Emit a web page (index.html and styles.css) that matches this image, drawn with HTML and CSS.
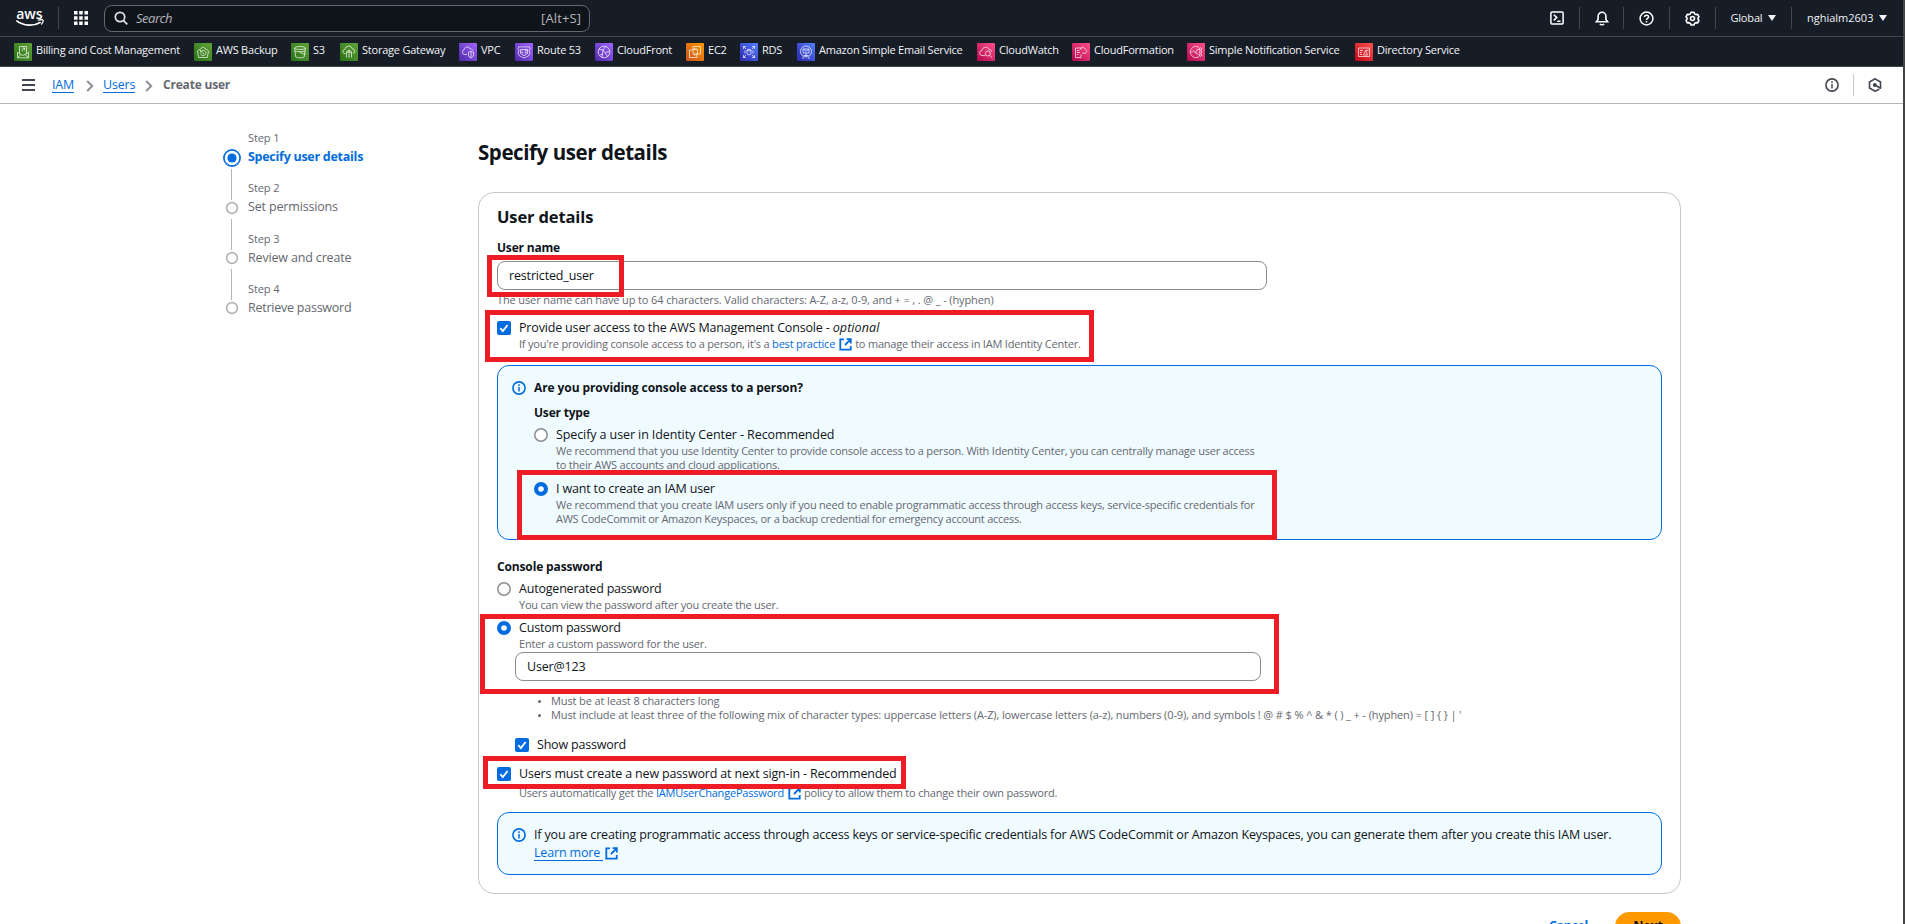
FILE: index.html
```html
<!DOCTYPE html>
<html lang="en">
<head>
<meta charset="utf-8">
<title>Create user | IAM | Global</title>
<link rel="stylesheet" href="styles.css">
</head>
<body>
<svg class="defs" width="0" height="0" aria-hidden="true">
  <defs>
    <linearGradient id="g-green" x1="0" y1="1" x2="1" y2="0"><stop offset="0" stop-color="#277116"/><stop offset="1" stop-color="#60a337"/></linearGradient>
    <linearGradient id="g-purple" x1="0" y1="1" x2="1" y2="0"><stop offset="0" stop-color="#4d27a8"/><stop offset="1" stop-color="#a166ff"/></linearGradient>
    <linearGradient id="g-orange" x1="0" y1="1" x2="1" y2="0"><stop offset="0" stop-color="#c8511b"/><stop offset="1" stop-color="#ff9900"/></linearGradient>
    <linearGradient id="g-blue" x1="0" y1="1" x2="1" y2="0"><stop offset="0" stop-color="#2e27ad"/><stop offset="1" stop-color="#527fff"/></linearGradient>
    <linearGradient id="g-pink" x1="0" y1="1" x2="1" y2="0"><stop offset="0" stop-color="#b0084d"/><stop offset="1" stop-color="#ff4f8b"/></linearGradient>
    <linearGradient id="g-red" x1="0" y1="1" x2="1" y2="0"><stop offset="0" stop-color="#bd0816"/><stop offset="1" stop-color="#ff5252"/></linearGradient>
    <symbol id="ext" viewBox="0 0 13 13"><path d="M5 1.300H1.300v10.400h10.400V8M7.600 1.200h4.200v4.200M11.600 1.400 6 7" fill="none" stroke="currentColor" stroke-width="1.800"/></symbol>
    <symbol id="info" viewBox="0 0 14 14"><circle cx="7" cy="7" r="6.100" fill="none" stroke="currentColor" stroke-width="1.600"/><path d="M7 3.300v1.600M7 6v4.400" stroke="currentColor" stroke-width="1.500"/></symbol>
    <symbol id="chev" viewBox="0 0 8 12"><path d="m1.200 1 5 5-5 5" fill="none" stroke="#8c8c94" stroke-width="1.900"/></symbol>
    <symbol id="check" viewBox="0 0 14 14"><rect width="14" height="14" rx="2" fill="#006ce0"/><path d="m3.300 7.200 2.500 2.800 4.800-6" fill="none" stroke="#fff" stroke-width="1.800"/></symbol>
    <symbol id="r-off" viewBox="0 0 14 14"><circle cx="7" cy="7" r="6.200" fill="#fff" stroke="#8c8c94" stroke-width="1.500"/></symbol>
    <symbol id="r-on" viewBox="0 0 14 14"><circle cx="7" cy="7" r="7" fill="#006ce0"/><circle cx="7" cy="7" r="2.800" fill="#fff"/></symbol>
  </defs>
</svg>

<header class="topbar">
  <svg class="logo" width="30" height="20" viewBox="0 0 30 20"><text x="1.200" y="10.600" textLength="26.500" lengthAdjust="spacingAndGlyphs">aws</text><path d="M1.300 12.600c7.500 5.600 17 6 24.300 1.600" fill="none" stroke="#fff" stroke-width="1.700"/><path d="M22.800 12.200c3-.6 5-.6 5.300 0 .3.900-.4 2.800-1.800 4.300" fill="none" stroke="#fff" stroke-width="1.300"/></svg>
  <i class="vline after-logo"></i>
  <svg class="apps" width="14" height="14" viewBox="0 0 14 14" fill="#fff"><path d="M0 0h3.500v3.500H0zM5.200 0h3.500v3.500H5.200zM10.500 0H14v3.500h-3.500zM0 5.200h3.500v3.500H0zM5.200 5.200h3.500v3.500H5.200zM10.500 5.200H14v3.500h-3.500zM0 10.500h3.500V14H0zM5.200 10.500h3.500V14H5.200zM10.500 10.500H14V14h-3.500z"/></svg>
  <div class="search">
    <svg width="14" height="14" viewBox="0 0 14 14" fill="none" stroke="#e0e2e6" stroke-width="1.700"><circle cx="6" cy="6" r="4.700"/><path d="m9.300 9.300 4 4"/></svg>
    <em>Search</em><span>[Alt+S]</span>
  </div>
  <div class="tools">
    <svg width="14" height="14" viewBox="0 0 14 14" fill="none" stroke="#fff" stroke-width="1.500"><rect x=".9" y=".9" width="12.200" height="12.200" rx="1"/><path d="m3.800 3.800 3 2.800-3 2.800M7.300 10.200h3.200"/></svg>
    <i class="vline"></i>
    <svg width="14" height="15" viewBox="0 0 14 15" fill="none" stroke="#fff" stroke-width="1.600"><path d="M1.300 10.800h11.400L10.900 8.400V5.200a3.900 3.900 0 0 0-7.800 0v3.200zM5 12.800c.8 1.300 3.200 1.300 4 0"/></svg>
    <i class="vline"></i>
    <svg width="15" height="15" viewBox="0 0 15 15" fill="none" stroke="#fff" stroke-width="1.500"><circle cx="7.500" cy="7.500" r="6.400"/><path d="M5.500 6.100c0-2.700 4.100-2.500 4.100-.2 0 1.500-2.100 1.500-2.100 3M7.500 9.900v1.500"/></svg>
    <i class="vline"></i>
    <svg width="15" height="15" viewBox="0 0 15 15" fill="none" stroke="#fff" stroke-width="1.600"><path d="M6 1.200h3l.5 1.500 1.600.9 1.600-.3 1.300 2.500-1 1.200v1.200l1 1.200-1.300 2.500-1.600-.3-1.600.9-.5 1.500H6l-.5-1.500-1.600-.9-1.600.3L1 9.400l1-1.200V7L1 5.800l1.300-2.500 1.600.3 1.600-.9z" stroke-linejoin="round"/><circle cx="7.500" cy="7.500" r="2"/></svg>
    <i class="vline"></i>
    <span class="menu global">Global<b></b></span>
    <i class="vline"></i>
    <span class="menu account">nghialm2603<b></b></span>
  </div>
</header>

<nav class="favorites">
  <a><svg viewBox="0 0 18 18"><rect width="18" height="18" rx="1" fill="url(#g-green)"/><path d="M3.500 9.500v5.300h11V9.500L9 12.500zM3.500 14.500 7 11.500M14.500 14.500 11 11.500M5.500 10.500V3.500h7v7M7.500 8l3-3M8.300 5h2.300v2.300"/></svg><span>Billing and Cost Management</span></a>
  <a><svg viewBox="0 0 18 18"><rect width="18" height="18" rx="1" fill="url(#g-green)"/><path d="m3.500 8 5.500-4 5.500 4-1.200 6.500H4.700zM7 8.500a2.700 2.700 0 1 1-.5 2M6.500 7v2h2M9 9.500v1.300h1"/></svg><span>AWS Backup</span></a>
  <a><svg viewBox="0 0 18 18"><rect width="18" height="18" rx="1" fill="url(#g-green)"/><ellipse cx="9" cy="5" rx="5.500" ry="1.500"/><path d="m3.500 5 1.300 9c.8 1 7.600 1 8.400 0l1.300-9M4 8c2 1 8 1 10 0M8.500 9l5 2.500 1.200-1.500"/></svg><span>S3</span></a>
  <a><svg viewBox="0 0 18 18"><rect width="18" height="18" rx="1" fill="url(#g-green)"/><path d="M5.500 10.500H5a2 2 0 0 1-.3-4A4 4 0 0 1 12.500 6a2.300 2.300 0 0 1 .5 4.500M6.500 14.500V9h5v5.500M9 7v8M6.500 9 9 7l2.500 2"/></svg><span>Storage Gateway</span></a>
  <a><svg viewBox="0 0 18 18"><rect width="18" height="18" rx="1" fill="url(#g-purple)"/><path d="M8 11.500H5.300a2.300 2.300 0 0 1-.3-4.500c0-3.500 5.500-4 6.300-1 1.500-.2 2.500.5 2.700 1.500M12 8.300l2.500 1V12c0 1.500-1.200 2.300-2.500 3-1.300-.7-2.500-1.500-2.500-3V9.300zM12 8.500v6"/></svg><span>VPC</span></a>
  <a><svg viewBox="0 0 18 18"><rect width="18" height="18" rx="1" fill="url(#g-purple)"/><path d="M4 3.500c1 .7 2 .7 2.700 0 1.500.7 3 .7 4.600 0 .7.700 1.700.7 2.700 0l1 2c-1 1.500-1 3 0 5-1 3-4 3.500-6 4.500-2-1-5-1.500-6-4.500 1-2 1-3.500 0-5z"/><path d="M5.500 6.500h7v4L9 12.800l-3.500-2.300zM7 7.500v2.500h1.500M10 7.500h1.500l-1 1.200 1 1.300H10"/></svg><span>Route 53</span></a>
  <a><svg viewBox="0 0 18 18"><rect width="18" height="18" rx="1" fill="url(#g-purple)"/><circle cx="9" cy="9" r="5.800"/><path d="M4 6.300 8 7l5 7M8 7l2.500-3.500M7 14.500 8 7M10.500 9.500l4-1M5 12l3-1"/></svg><span>CloudFront</span></a>
  <a><svg viewBox="0 0 18 18"><rect width="18" height="18" rx="1" fill="url(#g-orange)"/><path d="M7 3.500h7.500V11H11M11 11v3.500H3.500V7H7M7 6.500h4.500v4.500H7zM7 6.500v-3M8.500 5v1.500M10 5v1.500M8.500 11v1.500M10 11v1.500"/></svg><span>EC2</span></a>
  <a><svg viewBox="0 0 18 18"><rect width="18" height="18" rx="1" fill="url(#g-blue)"/><path d="M3.500 6V3.500H6M12 3.500h2.500V6M14.500 12v2.500H12M6 14.500H3.500V12M3.500 3.500 6 6M14.500 3.500 12 6M14.500 14.500 12 12M3.500 14.500 6 12M7 7c.5-1 3.500-1 4 0v4c-.5 1-3.500 1-4 0zM7 7.300c1 .7 3 .7 4 0M5 7.500v3M13 7.500v3"/></svg><span>RDS</span></a>
  <a><svg viewBox="0 0 18 18"><rect width="18" height="18" rx="1" fill="url(#g-blue)"/><circle cx="9" cy="8.500" r="5.500"/><path d="M6 6h6v4H6zM6 6l3 2.300L12 6M9 10v4M6.500 12.500h5M5 15h2M11 15h2"/></svg><span>Amazon Simple Email Service</span></a>
  <a><svg viewBox="0 0 18 18"><rect width="18" height="18" rx="1" fill="url(#g-pink)"/><path d="M8 12.500H5.300a2.500 2.500 0 0 1-.3-5c.3-4 6-4.500 7-1 1.700 0 2.700 1 2.500 2.500"/><circle cx="10.800" cy="10.500" r="2.500"/><path d="m12.600 12.300 2.400 2.500"/></svg><span>CloudWatch</span></a>
  <a><svg viewBox="0 0 18 18"><rect width="18" height="18" rx="1" fill="url(#g-pink)"/><path d="M9 11.500v3H3.500V5H9v2M5 7.500h2.500M5 9.500h3M5 11.500h1.500M8.500 5.500c1.500-2 4-1.500 4.300.5 2.500.5 2.200 4 0 4.200H10"/></svg><span>CloudFormation</span></a>
  <a><svg viewBox="0 0 18 18"><rect width="18" height="18" rx="1" fill="url(#g-pink)"/><path d="M12 4.500a5.500 5.500 0 1 0 0 9M3.500 9H6M6 7l2.500 3L10 6.500h2M8.500 10l3 1.500"/><circle cx="13.500" cy="6" r="1.200"/><circle cx="13.500" cy="9" r="1.200"/><circle cx="13.500" cy="12" r="1.200"/></svg><span>Simple Notification Service</span></a>
  <a><svg viewBox="0 0 18 18"><rect width="18" height="18" rx="1" fill="url(#g-red)"/><path d="M3.500 5h11v8.500h-11zM5 7.500h3M5 9.500h2M5 11.500h2M8.500 12l2-4.500 2 4.500zM10.500 7.500h3"/></svg><span>Directory Service</span></a>
</nav>

<div class="crumbbar">
  <svg class="burger" width="13" height="12" viewBox="0 0 13 12"><path d="M0 1h13M0 6h13M0 11h13" stroke="#424650" stroke-width="1.800"/></svg>
  <a class="crumb iam">IAM</a><svg class="sep" width="8" height="12"><use href="#chev"/></svg>
  <a class="crumb users">Users</a><svg class="sep" width="8" height="12"><use href="#chev"/></svg>
  <span class="here">Create user</span>
  <div class="crumb-tools">
    <svg width="14" height="14"><use href="#info"/></svg><i></i>
    <svg width="14" height="14" viewBox="0 0 14 14"><path d="M11.300 11.200 7 13.200 1.500 10V4L7 .8 12.500 4v6.500" fill="none" stroke="#424650" stroke-width="1.600"/><circle cx="6.800" cy="7" r="2" fill="#424650"/><path d="m7 7 6 3.500" stroke="#424650" stroke-width="1.600"/></svg>
  </div>
</div>

<div class="page">
  <ol class="steps">
    <li class="current"><div class="rail"><svg width="18" height="18" viewBox="0 0 18 18"><circle cx="9" cy="9" r="8.100" fill="#fff" stroke="#006ce0" stroke-width="1.700"/><circle cx="9" cy="9" r="4.600" fill="#006ce0"/></svg><i></i></div><div><small>Step 1</small><span>Specify user details</span></div></li>
    <li><div class="rail"><svg width="18" height="18" viewBox="0 0 18 18"><circle cx="9" cy="9" r="5.400" fill="#fff" stroke="#b4b4bb" stroke-width="1.700"/></svg><i></i></div><div><small>Step 2</small><span>Set permissions</span></div></li>
    <li><div class="rail"><svg width="18" height="18" viewBox="0 0 18 18"><circle cx="9" cy="9" r="5.400" fill="#fff" stroke="#b4b4bb" stroke-width="1.700"/></svg><i></i></div><div><small>Step 3</small><span>Review and create</span></div></li>
    <li><div class="rail"><svg width="18" height="18" viewBox="0 0 18 18"><circle cx="9" cy="9" r="5.400" fill="#fff" stroke="#b4b4bb" stroke-width="1.700"/></svg></div><div><small>Step 4</small><span class="tight">Retrieve password</span></div></li>
  </ol>

  <main class="content">
    <h1>Specify user details</h1>
    <section class="panel">
      <h2>User details</h2>
      <h3 class="name-label">User name</h3>
      <div class="input name-input">restricted_user</div>
      <p class="hint name-hint">The user name can have up to 64 characters. Valid characters: A-Z, a-z, 0-9, and + = , . @ _ - (hyphen)</p>

      <div class="choice console-access">
        <svg width="14" height="14"><use href="#check"/></svg>
        <div><p class="label provide">Provide user access to the AWS Management Console - <em>optional</em></p>
        <p class="desc d-access">If you're providing console access to a person, it's a <a>best practice</a><svg class="ext" width="13" height="13"><use href="#ext"/></svg><span>to manage their access in IAM Identity Center.</span></p></div>
      </div>

      <div class="alert person">
        <svg class="info" width="14" height="14"><use href="#info"/></svg>
        <div class="alert-body">
          <h3 class="wide">Are you providing console access to a person?</h3>
          <h3 class="user-type">User type</h3>
          <div class="choice type-1"><svg width="14" height="14"><use href="#r-off"/></svg>
            <div><p class="label identity">Specify a user in Identity Center - Recommended</p>
            <p class="desc rec">We recommend that you use Identity Center to provide console access to a person. With Identity Center, you can centrally manage user access<br>to their AWS accounts and cloud applications.</p></div></div>
          <div class="choice type-2"><svg width="14" height="14"><use href="#r-on"/></svg>
            <div><p class="label">I want to create an IAM user</p>
            <p class="desc rec">We recommend that you create IAM users only if you need to enable programmatic access through access keys, service-specific credentials for<br><span class="backup">AWS CodeCommit or Amazon Keyspaces, or a backup credential for emergency account access.</span></p></div></div>
        </div>
      </div>

      <h3 class="console-pw">Console password</h3>
      <div class="choice auto"><svg width="14" height="14"><use href="#r-off"/></svg>
        <div><p class="label snug">Autogenerated password</p><p class="desc rec">You can view the password after you create the user.</p></div></div>
      <div class="choice custom"><svg width="14" height="14"><use href="#r-on"/></svg>
        <div><p class="label snug">Custom password</p><p class="desc rec">Enter a custom password for the user.</p></div></div>
      <div class="input pw-input">User@123</div>
      <ul class="rules">
        <li>Must be at least 8 characters long</li>
        <li>Must include at least three of the following mix of character types: uppercase letters (A-Z), lowercase letters (a-z), numbers (0-9), and symbols ! @ # $ % ^ &amp; * ( ) _ + - (hyphen) = [ ] { } | '</li>
      </ul>
      <div class="choice show"><svg width="14" height="14"><use href="#check"/></svg><p class="label snug">Show password</p></div>
      <div class="choice must"><svg width="14" height="14"><use href="#check"/></svg>
        <div><p class="label">Users must create a new password at next sign-in - Recommended</p>
        <p class="desc d-must">Users automatically get the <a>IAMUserChangePassword</a><svg class="ext" width="13" height="13"><use href="#ext"/></svg><span>policy to allow them to change their own password.</span></p></div></div>

      <div class="alert keys">
        <svg class="info" width="14" height="14"><use href="#info"/></svg>
        <div class="alert-body"><p class="label keys-text">If you are creating programmatic access through access keys or service-specific credentials for AWS CodeCommit or Amazon Keyspaces, you can generate them after you create this IAM user.</p>
        <p class="label more"><a class="learn">Learn more&nbsp;</a><svg class="ext" width="13" height="13"><use href="#ext"/></svg></p></div>
      </div>
    </section>
    <div class="actions"><a>Cancel</a><button>Next</button></div>
  </main>
</div>

<div class="mark mark-name"></div>
<div class="mark mark-access"></div>
<div class="mark mark-iam"></div>
<div class="mark mark-password"></div>
<div class="mark mark-reset"></div>
<div class="edge"></div>
</body>
</html>
```
FILE: styles.css
```css
* { box-sizing: border-box; }
body {
  position: relative;
  margin: 0;
  width: 1905px;
  height: 924px;
  overflow: hidden;
  background: #fff;
  color: #0f141a;
  font: 12.5px/18px "Open Sans", "Noto Sans", sans-serif;
  letter-spacing: -.16px;
}
h1, h2, h3, p, ol, ul { margin: 0; padding: 0; }
svg { display: block; flex: none; }
.defs { position: absolute; }

/* Top bar */
.topbar {
  display: flex;
  align-items: center;
  height: 37px;
  padding-left: 15px;
  background: #161d26;
  border-bottom: 1px solid #424650;
}
.logo { overflow: visible; }
.logo text { font: 600 13.5px "Open Sans", sans-serif; fill: #fff; letter-spacing: 0; }
.vline { width: 1px; height: 22px; background: #424650; flex: none; }
.after-logo { margin: 0 15px 0 13px; }
.search {
  display: flex;
  align-items: center;
  width: 486px;
  height: 27px;
  margin-left: 16px;
  padding: 0 8px 1px 9px;
  border: 1px solid #656871;
  border-radius: 8px;
  background: #0f141a;
  color: #b4b4bb;
  font-size: 13px;
}
.search em { margin-left: 8px; letter-spacing: -.5px; }
.search span { margin-left: auto; letter-spacing: .1px; }
.tools { display: flex; align-items: center; justify-content: space-between; width: 337px; margin: 0 18px 0 auto; }
.menu {
  display: flex;
  align-items: center;
  justify-content: space-between;
  color: #f3f3f7;
  font-size: 11px;
  font-weight: 500;
  letter-spacing: 0;
}
.global { width: 46px; letter-spacing: -.15px; }
.account { width: 80px; }
.menu b { border: 4px solid transparent; border-top: 6px solid #f3f3f7; border-bottom: 0; }

/* Favorites */
.favorites {
  display: grid;
  grid-template-columns: 180px 97px 49px 119px 56px 80px 91px 54px 57px 180px 95px 115px 168px auto;
  height: 30px;
  padding: 6px 0 0 14px;
  background: #161d26;
  border-bottom: 1px solid #424650;
  color: #f3f3f7;
  font-size: 11px;
  font-weight: 500;
  line-height: 14px;
  letter-spacing: -.22px;
}
.favorites a { display: flex; gap: 4px; white-space: nowrap; }
.favorites svg { width: 18px; height: 18px; fill: none; stroke: rgba(255, 255, 255, .85); stroke-width: .8; }
.favorites svg rect { stroke: none; }

/* Breadcrumbs */
.crumbbar {
  display: flex;
  align-items: center;
  height: 37px;
  padding: 0 23px 0 22px;
  border-bottom: 1px solid #b4b4b8;
}
.crumb { color: #006ce0; border-bottom: 1px solid #006ce0; line-height: 15px; }
.iam { width: 22px; margin-left: 17px; }
.users { width: 32px; }
.sep { margin: 1px 9px 0 12px; }
.users + .sep { margin-left: 10px; }
.here { color: #656871; font-size: 12px; font-weight: 700; letter-spacing: -.2px; margin-left: 1px; }
.crumb-tools { display: flex; align-items: center; gap: 14px; margin-left: auto; color: #424650; }
.crumb-tools i { width: 1px; height: 22px; background: #c6c6cd; }

/* Page */
.page { display: grid; grid-template-columns: 256px 1203px; padding: 25px 0 0 222px; }
.steps { list-style: none; }
.steps li { display: flex; gap: 7px; height: 50.3px; color: #656871; }
.rail { display: flex; flex-direction: column; align-items: center; gap: 2px; width: 19px; padding-top: 19.5px; }
.rail i { width: 1px; height: 31px; flex: none; background: #b4b4bb; }
.steps small, .steps span { display: block; }
.steps small { font-size: 11px; letter-spacing: -.1px; }
.steps span { margin-top: 1px; }
.steps .tight { letter-spacing: -.24px; }
.current span { color: #006ce0; font-weight: 700; letter-spacing: -.27px; }

h1 { height: 63px; padding-top: 10px; font-size: 20.5px; line-height: 26px; letter-spacing: -.43px; }
.panel { height: 702px; padding: 12px 18px 0 18px; border: 1px solid #c6c6cd; border-radius: 16px; }
h2 { font-size: 16.5px; line-height: 24px; letter-spacing: -.13px; }
h3 { font-size: 12px; line-height: 18px; letter-spacing: -.2px; }
h3.wide { letter-spacing: -.09px; }
.name-label { margin-top: 10px; }
.input {
  height: 29px;
  padding: 0 11px;
  border: 1px solid #8c8c94;
  border-radius: 8px;
  line-height: 27px;
}
.name-input { width: 770px; margin-top: 4px; }
.hint, .desc { color: #656871; font-size: 11px; line-height: 14px; }
.name-hint { margin-top: 2px; line-height: 16px; letter-spacing: -.12px; }
.choice { display: flex; gap: 8px; white-space: nowrap; }
.choice > svg { margin-top: 2px; }
.desc { display: flex; align-items: center; }
.desc a, .learn { color: #006ce0; }
.ext { color: #006ce0; }
.desc .ext { margin: 0 3px 0 4px; }
.rec { display: block; letter-spacing: -.215px; }
.backup { letter-spacing: -.25px; }
.snug { letter-spacing: -.2px; }
.console-access { margin-top: 11px; }
.provide { letter-spacing: -.17px; }
.provide em { letter-spacing: .1px; }
.d-access { white-space: pre; letter-spacing: -.205px; }
.d-must { white-space: pre; letter-spacing: -.195px; }

.alert { display: flex; gap: 8px; padding: 13px 14px; border: 1px solid #006ce0; border-radius: 12px; background: #f0fbff; }
.info { color: #006ce0; margin-top: 2px; }
.person { height: 175px; margin-top: 14px; }
.user-type { margin-top: 7px; }
.type-1 { margin-top: 4px; }
.type-2 { margin-top: 8px; }
.identity { letter-spacing: -.1px; }

.console-pw { margin-top: 18px; letter-spacing: -.14px; }
.auto { margin-top: 4px; }
.custom { margin-top: 7px; }
.pw-input { width: 746px; margin: 1px 0 0 18px; }
.rules { margin: 13px 0 0 41px; list-style: none; color: #656871; font-size: 11px; line-height: 14px; letter-spacing: -.117px; }
.rules li { display: flex; align-items: center; gap: 10px; white-space: nowrap; }
.rules li::before { content: ""; width: 3px; height: 3px; margin-top: 1px; border-radius: 50%; background: #656871; }
.show { margin: 14px 0 0 18px; }
.must { margin-top: 11px; }
.d-must { margin-top: 2px; line-height: 16px; }
.keys { height: 63px; margin-top: 11px; white-space: nowrap; }
.alert-body .label { display: flex; align-items: center; }
.keys-text { letter-spacing: -.15px; }
.more { margin-top: 1px; }
.learn { line-height: 15px; border-bottom: 1px solid #006ce0; }
.learn + .ext { margin-left: 2px; }

.actions { display: flex; justify-content: flex-end; align-items: center; gap: 27px; margin-top: 18px; }
.actions a { color: #006ce0; font-weight: 700; letter-spacing: -.4px; line-height: 17px; padding-bottom: 2px; }
.actions button {
  width: 66px;
  height: 29px;
  padding: 0 0 2px;
  border: 0;
  border-radius: 15px;
  background: #ff9900;
  color: #0f141a;
  font: 700 12.5px "Open Sans", sans-serif;
  letter-spacing: -.2px;
}

/* Highlight frames drawn over the form */
.mark { position: absolute; border: 5px solid #ee1c24; }
.mark-name { left: 487px; top: 255px; width: 137px; height: 42px; }
.mark-access { left: 485px; top: 310px; width: 609px; height: 52px; }
.mark-iam { left: 517px; top: 470px; width: 760px; height: 70px; }
.mark-password { left: 480px; top: 614px; width: 799px; height: 80px; }
.mark-reset { left: 483px; top: 756px; width: 423px; height: 33px; }
.edge { position: absolute; right: 0; top: 0; width: 2px; height: 924px; background: #444; }
```
